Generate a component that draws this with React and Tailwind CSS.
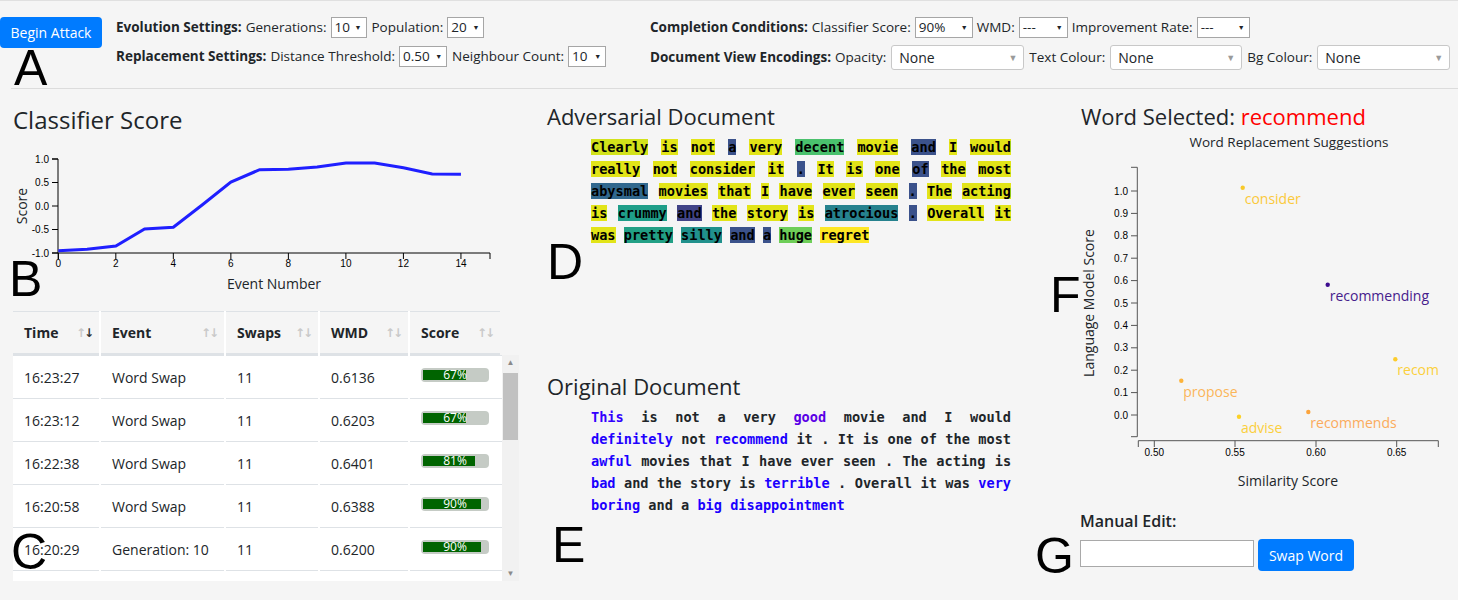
import React from 'react';

// table rows: time, event, swaps, wmd, score %
const ROWS = [
  ['16:23:27', 'Word Swap', '11', '0.6136', 67],
  ['16:23:12', 'Word Swap', '11', '0.6203', 67],
  ['16:22:38', 'Word Swap', '11', '0.6401', 81],
  ['16:20:58', 'Word Swap', '11', '0.6388', 90],
  ['16:20:29', 'Generation: 10', '11', '0.6200', 90],
  ['16:20:11', 'Word Swap', '10', '0.6172', 89],
  ['16:19:54', 'Word Swap', '9', '0.5911', 84],
  ['16:19:40', 'Word Swap', '8', '0.5634', 92],
];

const ADV = [
  ['Clearly', 'bg-[#d2e21b]'], ['is', 'bg-[#e2e418]'], ['not', 'bg-[#e2e418]'], ['a', 'bg-[#3b528b]'],
  ['very', 'bg-[#e2e418]'], ['decent', 'bg-[#4ac16d]'], ['movie', 'bg-[#e2e418]'], ['and', 'bg-[#3b528b]'],
  ['I', 'bg-[#e2e418]'], ['would', 'bg-[#e2e418]'], ['really', 'bg-[#e2e418]'], ['not', 'bg-[#e2e418]'],
  ['consider', 'bg-[#e2e418]'], ['it', 'bg-[#e2e418]'], ['.', 'bg-[#3b528b]'], ['It', 'bg-[#e2e418]'],
  ['is', 'bg-[#e2e418]'], ['one', 'bg-[#e2e418]'], ['of', 'bg-[#3b528b]'], ['the', 'bg-[#e2e418]'],
  ['most', 'bg-[#e2e418]'], ['abysmal', 'bg-[#31688e]'], ['movies', 'bg-[#e2e418]'], ['that', 'bg-[#e2e418]'],
  ['I', 'bg-[#e2e418]'], ['have', 'bg-[#e2e418]'], ['ever', 'bg-[#e2e418]'], ['seen', 'bg-[#e2e418]'],
  ['.', 'bg-[#3b528b]'], ['The', 'bg-[#e2e418]'], ['acting', 'bg-[#e2e418]'], ['is', 'bg-[#e2e418]'],
  ['crummy', 'bg-[#1f9e89]'], ['and', 'bg-[#414487]'], ['the', 'bg-[#e2e418]'], ['story', 'bg-[#e2e418]'],
  ['is', 'bg-[#e2e418]'], ['atrocious', 'bg-[#26828e]'], ['.', 'bg-[#3b528b]'], ['Overall', 'bg-[#e2e418]'],
  ['it', 'bg-[#e2e418]'], ['was', 'bg-[#e2e418]'], ['pretty', 'bg-[#22a085]'], ['silly', 'bg-[#21918c]'],
  ['and', 'bg-[#3b528b]'], ['a', 'bg-[#3b528b]'], ['huge', 'bg-[#6ece58]'], ['regret', 'bg-[#fde725]'],
];

const ORIG = 'This is not a very good movie and I would definitely not recommend it . It is one of the most awful movies that I have ever seen . The acting is bad and the story is terrible . Overall it was very boring and a big disappointment'.split(' ');
// words that differ from the adversarial version
const CHANGED = {
  0: 'text-[#3300ff]', 5: 'text-[#5a00e6]', 10: 'text-[#1e00ff]', 12: 'text-[#1a00ff]', 21: 'text-[#1a00ff]',
  32: 'text-[#1a00ff]', 37: 'text-[#1a00ff]', 42: 'text-[#1a00ff]', 43: 'text-[#1e00ff]', 46: 'text-[#1a00ff]', 47: 'text-[#1a00ff]',
};

const SCORES = [250.7, 249.3, 246, 229, 227.3, 205, 182, 169.7, 169.3, 167, 163, 163, 167.7, 174, 174.3];

const POINTS = [
  { x: 1242.7, y: 187.7, word: 'consider', dot: '#f8c92a', text: '#fbc93a' },
  { x: 1327.7, y: 284.7, word: 'recommending', dot: '#3d0d8f', text: '#46208c' },
  { x: 1395.3, y: 359.3, word: 'recommended', dot: '#fccc2c', text: '#fbd03c' },
  { x: 1181.3, y: 380.7, word: 'propose', dot: '#fdb33a', text: '#fbb65a' },
  { x: 1239, y: 416.7, word: 'advise', dot: '#fcd126', text: '#fbcf3c' },
  { x: 1308.3, y: 412, word: 'recommends', dot: '#fca43c', text: '#fbab5c' },
];

const Select = ({ value, className }) => (
  <span className={`inline-flex h-[21px] items-center justify-between border border-[#a6a6a6] bg-white pl-[3px] pr-[4px] ${className}`}>
    <span>{value}</span>
    <span className="text-[7px] leading-none">▼</span>
  </span>
);

const BigSelect = ({ className }) => (
  <span className={`inline-flex h-[25px] items-center justify-between rounded-[3px] border border-[#c8c8c8] bg-white pl-[7px] pr-[6px] text-[14px] ${className}`}>
    <span>None</span>
    <span className="text-[9px] leading-none text-[#9a9a9a]">▼</span>
  </span>
);

const SortIcon = ({ active }) => (
  <span className="text-[12px] leading-none tracking-[-2px] text-[#c9c9c9] font-['DejaVu_Sans',sans-serif]">
    ↑<span className={active ? 'text-[#333]' : ''}>↓</span>
  </span>
);

const App = () => {
  const tx = (i) => 58.3 + 28.76 * i;
  const line = SCORES.map((y, i) => `${i ? 'L' : 'M'}${tx(i)},${y}`).join('');

  return (
    <div className="relative min-h-screen overflow-hidden bg-[#f5f5f5] text-[#212529] font-['Open_Sans','Noto_Sans',sans-serif]">
      {/* Header */}
      <header className="flex h-[88px] border-t border-[#e0e0e0] pt-[16px] text-[13.5px]">
        <button type="button" className="h-[31px] w-[102px] rounded-[4px] bg-[#007bff] text-[14px] text-white">
          Begin Attack
        </button>
        <div className="ml-[14px] flex w-[534px] flex-col gap-[8px]">
          <div className="flex h-[21px] items-center gap-[4px] whitespace-nowrap">
            <b>Evolution Settings:</b> Generations: <Select value="10" className="w-[36px]" />
            <span className="ml-px">Population:</span> <Select value="20" className="w-[37px]" />
          </div>
          <div className="flex h-[21px] items-center gap-[4px] whitespace-nowrap">
            <b>Replacement Settings:</b> Distance Threshold: <Select value="0.50" className="w-[48px]" />
            <span className="ml-px">Neighbour Count:</span> <Select value="10" className="w-[38px]" />
          </div>
        </div>
        <div className="flex flex-col gap-[7px]">
          <div className="flex h-[21px] items-center gap-[4px] whitespace-nowrap">
            <b>Completion Conditions:</b> Classifier Score: <Select value="90%" className="w-[58px]" />
            WMD: <Select value="---" className="w-[49px]" />
            Improvement Rate: <Select value="---" className="w-[53px]" />
          </div>
          <div className="flex h-[25px] items-center gap-[5px] whitespace-nowrap">
            <b>Document View Encodings:</b> <span className="-ml-px">Opacity:</span> <BigSelect className="w-[133px]" />
            Text Colour: <BigSelect className="w-[132px]" />
            Bg Colour: <BigSelect className="w-[133px]" />
          </div>
        </div>
      </header>
      <div className="ml-[11px] h-px bg-[#dcdcdc]" />

      {/* Main Section */}
      <main className="flex">
        {/* Classifier score + event table */}
        <section className="w-[530px] pl-[13px]">
          <h2 className="pt-[15px] text-[24px] font-medium leading-[32px]">Classifier Score</h2>
          <svg width="500" height="164" viewBox="13 136 500 164" className="block">
            <g fill="none" stroke="#000" strokeWidth="1">
              <path d="M52,159H58V253H52" />
              <path d="M58.3,259V253H490V259" />
              {[159, 182.5, 206, 229.5, 253].map((y) => <line key={y} x1="52" x2="58" y1={y} y2={y} />)}
              {[0, 2, 4, 6, 8, 10, 12, 14].map((i) => <line key={i} x1={tx(i)} x2={tx(i)} y1="253" y2="259" />)}
            </g>
            <g fontSize="10" fontFamily="Liberation Sans, Arial, sans-serif" fill="#000">
              {['1.0', '0.5', '0.0', '-0.5', '-1.0'].map((t, i) => (
                <text key={t} x="49" y={159 + 23.5 * i + 3.5} textAnchor="end">{t}</text>
              ))}
              {[0, 2, 4, 6, 8, 10, 12, 14].map((i) => (
                <text key={i} x={tx(i)} y="267" textAnchor="middle">{i}</text>
              ))}
            </g>
            <text x="274" y="289" fontSize="14" textAnchor="middle" fill="#212529">Event Number</text>
            <text transform="translate(27,206) rotate(-90)" fontSize="14" textAnchor="middle" fill="#212529">Score</text>
            <path d={line} fill="none" stroke="#1f1fff" strokeWidth="3" />
          </svg>

          <div className="mt-[11px] w-[487px]">
            <div className="grid grid-cols-[86px_123px_92px_88px_90px] gap-x-[2px] bg-white text-[14px] font-bold">
              {['Time', 'Event', 'Swaps', 'WMD', 'Score'].map((h, i) => (
                <div key={h} className="flex h-[44px] items-center justify-between border-t border-b-2 border-[#dee2e6] bg-[#f5f5f5] pl-[11px] pr-[7px]">
                  <span>{h}</span>
                  <SortIcon active={i === 0} />
                </div>
              ))}
            </div>
          </div>
          <div className="flex h-[226px] w-[506px]">
            <div className="w-[489px] overflow-hidden">
              {ROWS.map((r, i) => (
                <div key={i} className="grid grid-cols-[86px_123px_92px_88px_1fr] gap-x-[2px] bg-white text-[14px]">
                  {r.slice(0, 4).map((c, j) => (
                    <div key={j} className="h-[43px] border-t border-[#dee2e6] pl-[11px] pt-[12px] leading-[20px]">{c}</div>
                  ))}
                  <div className="h-[43px] border-t border-[#dee2e6] pl-[11px] pt-[12px]">
                    <div className="relative h-[14px] w-[68px] rounded-[4px] bg-[#c5cbc5] p-[2px]">
                      <div className="h-full bg-[#006400]" style={{ width: `${r[4]}%` }} />
                      <span className="absolute inset-0 text-center text-[12px] leading-[14px] text-white">{r[4]}%</span>
                    </div>
                  </div>
                </div>
              ))}
            </div>
            {/* scrollbar */}
            <div className="flex w-[17px] flex-col items-center bg-[#f1f1f1] text-[#8a8a8a]">
              <span className="h-[18px] pt-[3px] text-[8px] leading-none">▲</span>
              <div className="w-[15px] h-[67px] bg-[#c1c1c1]" />
              <span className="mt-auto h-[17px] pt-[5px] text-[8px] leading-none">▼</span>
            </div>
          </div>
        </section>

        {/* Documents */}
        <section className="w-[530px] pl-[17px]">
          <h2 className="pt-[12px] text-[22px] font-medium leading-[30px]">Adversarial Document</h2>
          <p className="ml-[44px] mt-[5px] w-[420px] text-justify font-['DejaVu_Sans_Mono',monospace] text-[13.6px] font-bold leading-[22px] text-black">
            {ADV.map(([w, bg], i) => (
              <React.Fragment key={i}>
                {i > 0 && ' '}
                <span className={bg}>{w}</span>
              </React.Fragment>
            ))}
          </p>
          <h2 className="mt-[125px] text-[22px] font-medium leading-[30px]">Original Document</h2>
          <p className="ml-[44px] mt-[5px] w-[420px] text-justify font-['DejaVu_Sans_Mono',monospace] text-[13.6px] font-bold leading-[22px] text-[#212529]">
            {ORIG.map((w, i) => (
              <React.Fragment key={i}>
                {i > 0 && ' '}
                <span className={CHANGED[i] || ''}>{w}</span>
              </React.Fragment>
            ))}
          </p>
        </section>

        {/* Word replacement */}
        <section className="flex-1">
          <h2 className="pl-[21px] pt-[12px] text-[22px] font-medium leading-[30px]">
            Word Selected: <span className="text-[#ff0000]">recommend</span>
          </h2>
          <svg width="398" height="369" viewBox="1060 131 398 369" className="block">
            <defs>
              <clipPath id="plot">
                <rect x="1138" y="131" width="300" height="310" />
              </clipPath>
            </defs>
            <text x="1289" y="146.5" fontSize="13.5" textAnchor="middle" fill="#212529">Word Replacement Suggestions</text>
            <g fill="none" stroke="#555" strokeWidth="1">
              <path d="M1131,167.3H1137.3V436.7H1131" />
              <path d="M1138.3,447V440.7H1438.3V447" />
              {[0, 0.1, 0.2, 0.3, 0.4, 0.5, 0.6, 0.7, 0.8, 0.9, 1].map((v) => (
                <line key={v} x1="1131" x2="1137.3" y1={415 - 224 * v} y2={415 - 224 * v} />
              ))}
              {[1154.3, 1235, 1316, 1396.7].map((x) => <line key={x} x1={x} x2={x} y1="440.7" y2="447" />)}
            </g>
            <g fontSize="10" fontFamily="Liberation Sans, Arial, sans-serif" fill="#000">
              {[0, 0.1, 0.2, 0.3, 0.4, 0.5, 0.6, 0.7, 0.8, 0.9, 1].map((v) => (
                <text key={v} x="1128" y={415 - 224 * v + 3.5} textAnchor="end">{v.toFixed(1)}</text>
              ))}
              {[['0.50', 1154.3], ['0.55', 1235], ['0.60', 1316], ['0.65', 1396.7]].map(([t, x]) => (
                <text key={t} x={x} y="455.5" textAnchor="middle">{t}</text>
              ))}
            </g>
            <text x="1288" y="485.5" fontSize="14" textAnchor="middle" fill="#212529">Similarity Score</text>
            <text transform="translate(1094,303) rotate(-90)" fontSize="14" textAnchor="middle" fill="#212529">Language Model Score</text>
            <g clipPath="url(#plot)" fontSize="14">
              {POINTS.map((p) => (
                <g key={p.word}>
                  <circle cx={p.x} cy={p.y} r="2.2" fill={p.dot} />
                  <text x={p.x + 2} y={p.y + 16} fill={p.text}>{p.word}</text>
                </g>
              ))}
            </g>
          </svg>
          <div className="pl-[20px]">
            <div className="mt-[9px] text-[16px] font-semibold leading-[24px]">Manual Edit:</div>
            <div className="mt-[7px] flex items-start gap-[4px]">
              <input type="text" className="h-[27px] w-[174px] border border-[#a9a9a9] bg-white" />
              <button type="button" className="-mt-px h-[32px] w-[96px] rounded-[4px] bg-[#007bff] text-[14px] text-white">
                Swap Word
              </button>
            </div>
          </div>
        </section>
      </main>

      {/* figure labels */}
      <div className="absolute left-[14px] top-[43px] font-['Liberation_Sans',Arial,sans-serif] text-[50px] leading-none text-black">A</div>
      <div className="absolute left-[9px] top-[254px] font-['Liberation_Sans',Arial,sans-serif] text-[50px] leading-none text-black">B</div>
      <div className="absolute left-[11px] top-[527px] font-['Liberation_Sans',Arial,sans-serif] text-[50px] leading-none text-black">C</div>
      <div className="absolute left-[547px] top-[237px] font-['Liberation_Sans',Arial,sans-serif] text-[50px] leading-none text-black">D</div>
      <div className="absolute left-[552px] top-[520px] font-['Liberation_Sans',Arial,sans-serif] text-[50px] leading-none text-black">E</div>
      <div className="absolute left-[1050px] top-[270px] font-['Liberation_Sans',Arial,sans-serif] text-[50px] leading-none text-black">F</div>
      <div className="absolute left-[1035px] top-[531px] font-['Liberation_Sans',Arial,sans-serif] text-[50px] leading-none text-black">G</div>
    </div>
  );
};

export default App;
